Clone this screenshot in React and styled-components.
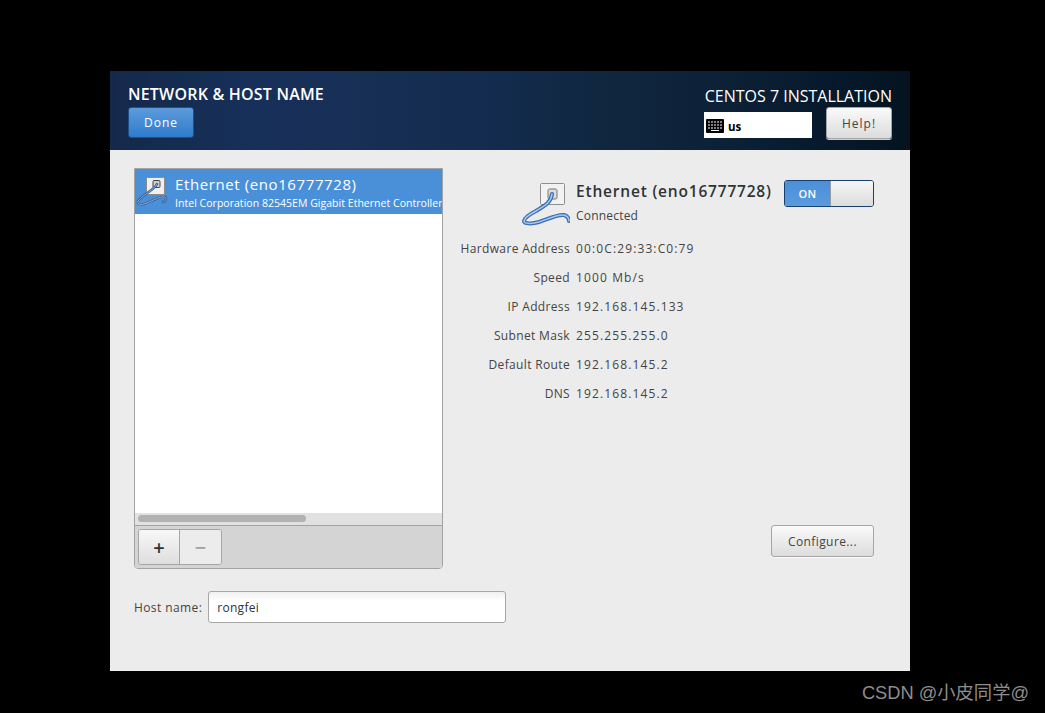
import styled, { createGlobalStyle } from 'styled-components'

const GlobalStyle = createGlobalStyle`
html, body {
    margin: 0;
    padding: 0;
    background: #000;
}
`;

const Screen = styled.div`
position: relative;
width: 1045px;
height: 713px;
overflow: hidden;
padding: 71px 0 0 110px;
box-sizing: border-box;
background: #000;
font-family: "Open Sans", "Noto Sans", sans-serif;
`;
const Window = styled.div`
display: flex;
flex-direction: column;
width: 800px;
height: 600px;
background: #ececec;
`;
const Header = styled.div`
display: flex;
justify-content: space-between;
height: 79px;
box-sizing: border-box;
padding: 15px 18px 0 18px;
background: linear-gradient(90deg, #14294a 0%, #17305a 18%, #182f55 32%, #132b4e 48%, #10273f 62%, #0c2036 78%, #06182a 92%, #04131f 100%);
`;
const HeaderLeft = styled.div`
display: flex;
flex-direction: column;
align-items: flex-start;
`;
const HeaderRight = styled.div`
display: flex;
flex-direction: column;
align-items: flex-end;
`;
const SpokeTitle = styled.div`
font-size: 16px;
line-height: 17px;
font-weight: 600;
letter-spacing: 0.2px;
color: #fff;
`;
const ProductTitle = styled.div`
font-size: 16px;
line-height: 20px;
color: #fff;
`;
const HeaderControls = styled.div`
display: flex;
align-items: flex-start;
gap: 14px;
margin-top: 1px;
`;
const Button = styled.button`
box-sizing: border-box;
margin: 0;
padding: 0;
font-family: inherit;
font-size: 12px;
letter-spacing: 0.4px;
color: #444;
border: 1px solid #a6a6a6;
border-radius: 3px;
background: linear-gradient(#fafafa, #dcdcdc);
box-shadow: 0 1px 0 rgba(255,255,255,0.8);
`;
const DoneButton = styled(Button)`
width: 66px;
height: 31px;
margin-top: 4px;
color: #fff;
letter-spacing: 1px;
border-color: #1e4f86;
background: linear-gradient(#5c9bdc, #2f7ccb);
box-shadow: none;
`;
const HelpButton = styled(Button)`
width: 66px;
height: 32px;
letter-spacing: 1px;
`;
const Keyboard = styled.div`
display: flex;
align-items: center;
gap: 4px;
width: 108px;
height: 26px;
margin-top: 5px;
padding: 2px 0 0 2px;
box-sizing: border-box;
background: #fff;
color: #000;
font-size: 11.5px;
font-weight: 700;
`;
const Content = styled.div`
position: relative;
flex: 1;
display: flex;
flex-direction: column;
padding: 18px 36px 0 24px;
`;
const Columns = styled.div`
display: flex;
height: 401px;
`;
const ListPanel = styled.div`
display: flex;
flex-direction: column;
width: 309px;
box-sizing: border-box;
border: 1px solid #a3a3a3;
border-radius: 0 0 4px 4px;
background: #fff;
overflow: hidden;
`;
const DeviceRow = styled.div`
display: flex;
gap: 7px;
height: 45px;
box-sizing: border-box;
padding: 7px 0 0 1px;
background: #4a90d9;
color: #fff;
white-space: nowrap;
overflow: hidden;
`;
const DeviceText = styled.div`
display: flex;
flex-direction: column;
`;
const DeviceName = styled.div`
font-size: 15px;
line-height: 16px;
letter-spacing: 0.6px;
`;
const DeviceModel = styled.div`
font-size: 10.5px;
line-height: 14px;
margin-top: 4px;
letter-spacing: 0.03px;
`;
const ListFill = styled.div`
flex: 1;
`;
const ScrollTrack = styled.div`
height: 12px;
padding: 2px 3px;
box-sizing: border-box;
background: #e1e1e1;
`;
const ScrollThumb = styled.div`
width: 168px;
height: 7px;
border-radius: 4px;
background: #b2b2b2;
`;
const ListToolbar = styled.div`
height: 43px;
box-sizing: border-box;
padding: 3px 0 0 3px;
border-top: 1px solid #a3a3a3;
background: #d4d4d4;
`;
const ButtonGroup = styled.div`
display: flex;
width: 84px;
height: 36px;
box-sizing: border-box;
border: 1px solid #a6a6a6;
border-radius: 3px;
overflow: hidden;
`;
const GroupButton = styled.div`
flex: ${(props) => props.$disabled ? '1' : 'none'};
width: ${(props) => props.$disabled ? 'auto' : '40px'};
display: flex;
align-items: center;
justify-content: center;
background: ${(props) => props.$disabled ? '#ececec' : 'linear-gradient(#f8f8f8, #dedede)'};
color: ${(props) => props.$disabled ? '#a0a0a0' : '#2e3436'};
font-size: 20px;
font-weight: 600;
& + & {
    border-left: 1px solid #a6a6a6;
}
`;
const Details = styled.div`
flex: 1;
display: flex;
flex-direction: column;
`;
const DetailHead = styled.div`
display: flex;
justify-content: space-between;
height: 66px;
padding-top: 12px;
box-sizing: border-box;
`;
const DetailTitleGroup = styled.div`
display: flex;
margin-left: 79px;
gap: 6px;
`;
const DetailText = styled.div`
display: flex;
flex-direction: column;
`;
const DetailName = styled.div`
font-size: 15.5px;
line-height: 22px;
font-weight: 600;
letter-spacing: 0.8px;
color: #2e3436;
white-space: nowrap;
`;
const DetailStatus = styled.div`
font-size: 12px;
line-height: 16px;
margin-top: 6px;
letter-spacing: 0.2px;
color: #444;
`;
const Switch = styled.div`
display: flex;
width: 90px;
height: 27px;
box-sizing: border-box;
border: 1px solid #16406e;
border-radius: 3px;
overflow: hidden;
`;
const SwitchOn = styled.div`
width: 45px;
display: flex;
align-items: center;
justify-content: center;
background: linear-gradient(#4a90d9, #5a9ade);
color: #fff;
font-size: 11px;
font-weight: 600;
letter-spacing: 0.3px;
`;
const SwitchKnob = styled.div`
flex: 1;
border-left: 1px solid #9a9a9a;
background: linear-gradient(#f6f6f6, #dcdcdc);
`;
const InfoGrid = styled.div`
display: grid;
grid-template-columns: 127px auto;
grid-auto-rows: 29px;
column-gap: 6px;
align-items: center;
margin-top: 0;
font-size: 12px;
letter-spacing: 0.35px;
color: #444;
`;
const InfoLabel = styled.div`
text-align: right;
white-space: nowrap;
`;
const InfoValue = styled.div`
white-space: nowrap;
letter-spacing: 1.12px;
`;
const ConfigureRow = styled.div`
flex: 1;
display: flex;
justify-content: flex-end;
align-items: flex-end;
padding-bottom: 12px;
`;
const ConfigureButton = styled(Button)`
width: 103px;
height: 32px;
`;
const HostRow = styled.div`
display: flex;
align-items: center;
gap: 6px;
margin-top: 22px;
font-size: 12px;
letter-spacing: 0.4px;
color: #444;
`;
const HostInput = styled.input`
width: 298px;
height: 32px;
box-sizing: border-box;
margin: 0;
padding: 0 8px;
font-family: inherit;
font-size: 12px;
letter-spacing: 0.3px;
color: #2e3436;
border: 1px solid #a6a6a6;
border-radius: 3px;
background: linear-gradient(#f0f0f0, #fff 30%);
outline: none;
`;
const Watermark = styled.div`
position: absolute;
right: 16px;
top: 681px;
font-family: "Liberation Sans", "Noto Sans CJK SC", sans-serif;
font-size: 18.3px;
line-height: 24px;
color: #8d8d8d;
white-space: nowrap;
`;
const IconSvg = styled.svg`
flex: none;
display: block;
margin-top: ${(props) => props.$top || 0}px;
`;

// wall socket with a cable curling out of it, list row version
const SmallEthernetIcon = () => {
    const cable = 'M21 8C18 14 8 18 2 25C1 28 4 29 8 28C14 26 24 20 29 21C31 22 30 25 27 26';
    return (
        <IconSvg width="32" height="30" viewBox="0 0 32 30">
            <rect x="10.5" y="1.5" width="18" height="17" fill="#f0f0f0" stroke="#8c8c8c" />
            <rect x="17" y="4.5" width="7" height="7" rx="1" fill="#cfcfcf" stroke="#444" />
            <path d={cable} fill="none" stroke="#2f5a92" strokeWidth="2.4" strokeLinecap="round" />
            <path d={cable} fill="none" stroke="#8fb2de" strokeWidth="1" strokeLinecap="round" />
        </IconSvg>
    );
};

// same drawing at the bigger size for the details header
const LargeEthernetIcon = () => {
    const cable = 'M30 11C29 20 22 23 14 28C8 31 3 34 2 38C2 41 10 41 17 39C26 36 36 31 42 32C45 33 47 35 47 38';
    return (
        <IconSvg $top={3} width="48" height="44" viewBox="0 0 48 44">
            <rect x="18.5" y="0.5" width="24" height="21" rx="1" fill="#f2f2f2" stroke="#8f8f8f" />
            <rect x="26" y="6" width="9" height="10" rx="1.5" fill="#dcdcdc" stroke="#777" />
            <path d={cable} fill="none" stroke="#3a6fb5" strokeWidth="4" strokeLinecap="round" />
            <path d={cable} fill="none" stroke="#a9c8ef" strokeWidth="1.5" strokeLinecap="round" />
        </IconSvg>
    );
};

const KeyboardIcon = () => (
    <svg width="18" height="14" viewBox="0 0 18 14">
        <rect x="0" y="0" width="18" height="14" rx="1" fill="#000" />
        <path d="M2 3h2M5 3h2M8 3h2M11 3h2M14 3h2M2 6h2M5 6h2M8 6h2M11 6h2M14 6h2M2 9h2M5 9h2M8 9h2M11 9h2M14 9h2M5 11.5h8" stroke="#fff" strokeWidth="1" />
    </svg>
);

const info = [
    ['Hardware Address', '00:0C:29:33:C0:79'],
    ['Speed', '1000 Mb/s'],
    ['IP Address', '192.168.145.133'],
    ['Subnet Mask', '255.255.255.0'],
    ['Default Route', '192.168.145.2'],
    ['DNS', '192.168.145.2'],
];

const InfoRow = ({ label, value }) => (
    <>
        <InfoLabel>{label}</InfoLabel>
        <InfoValue>{value}</InfoValue>
    </>
);

const App = () => {
    return (
        <Screen>
            <GlobalStyle />
            <Window>
                <Header>
                    <HeaderLeft>
                        <SpokeTitle>NETWORK &amp; HOST NAME</SpokeTitle>
                        <DoneButton>Done</DoneButton>
                    </HeaderLeft>
                    <HeaderRight>
                        <ProductTitle>CENTOS 7 INSTALLATION</ProductTitle>
                        <HeaderControls>
                            <Keyboard><KeyboardIcon />us</Keyboard>
                            <HelpButton>Help!</HelpButton>
                        </HeaderControls>
                    </HeaderRight>
                </Header>
                <Content>
                    <Columns>
                        <ListPanel>
                            <DeviceRow>
                                <SmallEthernetIcon />
                                <DeviceText>
                                    <DeviceName>Ethernet (eno16777728)</DeviceName>
                                    <DeviceModel>Intel Corporation 82545EM Gigabit Ethernet Controller</DeviceModel>
                                </DeviceText>
                            </DeviceRow>
                            <ListFill />
                            <ScrollTrack><ScrollThumb /></ScrollTrack>
                            <ListToolbar>
                                <ButtonGroup>
                                    <GroupButton>+</GroupButton>
                                    <GroupButton $disabled>−</GroupButton>
                                </ButtonGroup>
                            </ListToolbar>
                        </ListPanel>
                        <Details>
                            <DetailHead>
                                <DetailTitleGroup>
                                    <LargeEthernetIcon />
                                    <DetailText>
                                        <DetailName>Ethernet (eno16777728)</DetailName>
                                        <DetailStatus>Connected</DetailStatus>
                                    </DetailText>
                                </DetailTitleGroup>
                                <Switch>
                                    <SwitchOn>ON</SwitchOn>
                                    <SwitchKnob />
                                </Switch>
                            </DetailHead>
                            <InfoGrid>
                                {info.map(([label, value]) => (
                                    <InfoRow key={label} label={label} value={value} />
                                ))}
                            </InfoGrid>
                            <ConfigureRow>
                                <ConfigureButton>Configure...</ConfigureButton>
                            </ConfigureRow>
                        </Details>
                    </Columns>
                    <HostRow>
                        Host name:
                        <HostInput defaultValue="rongfei" />
                    </HostRow>
                </Content>
            </Window>
            <Watermark>CSDN @小皮同学@</Watermark>
        </Screen>
    )
}

export default App
